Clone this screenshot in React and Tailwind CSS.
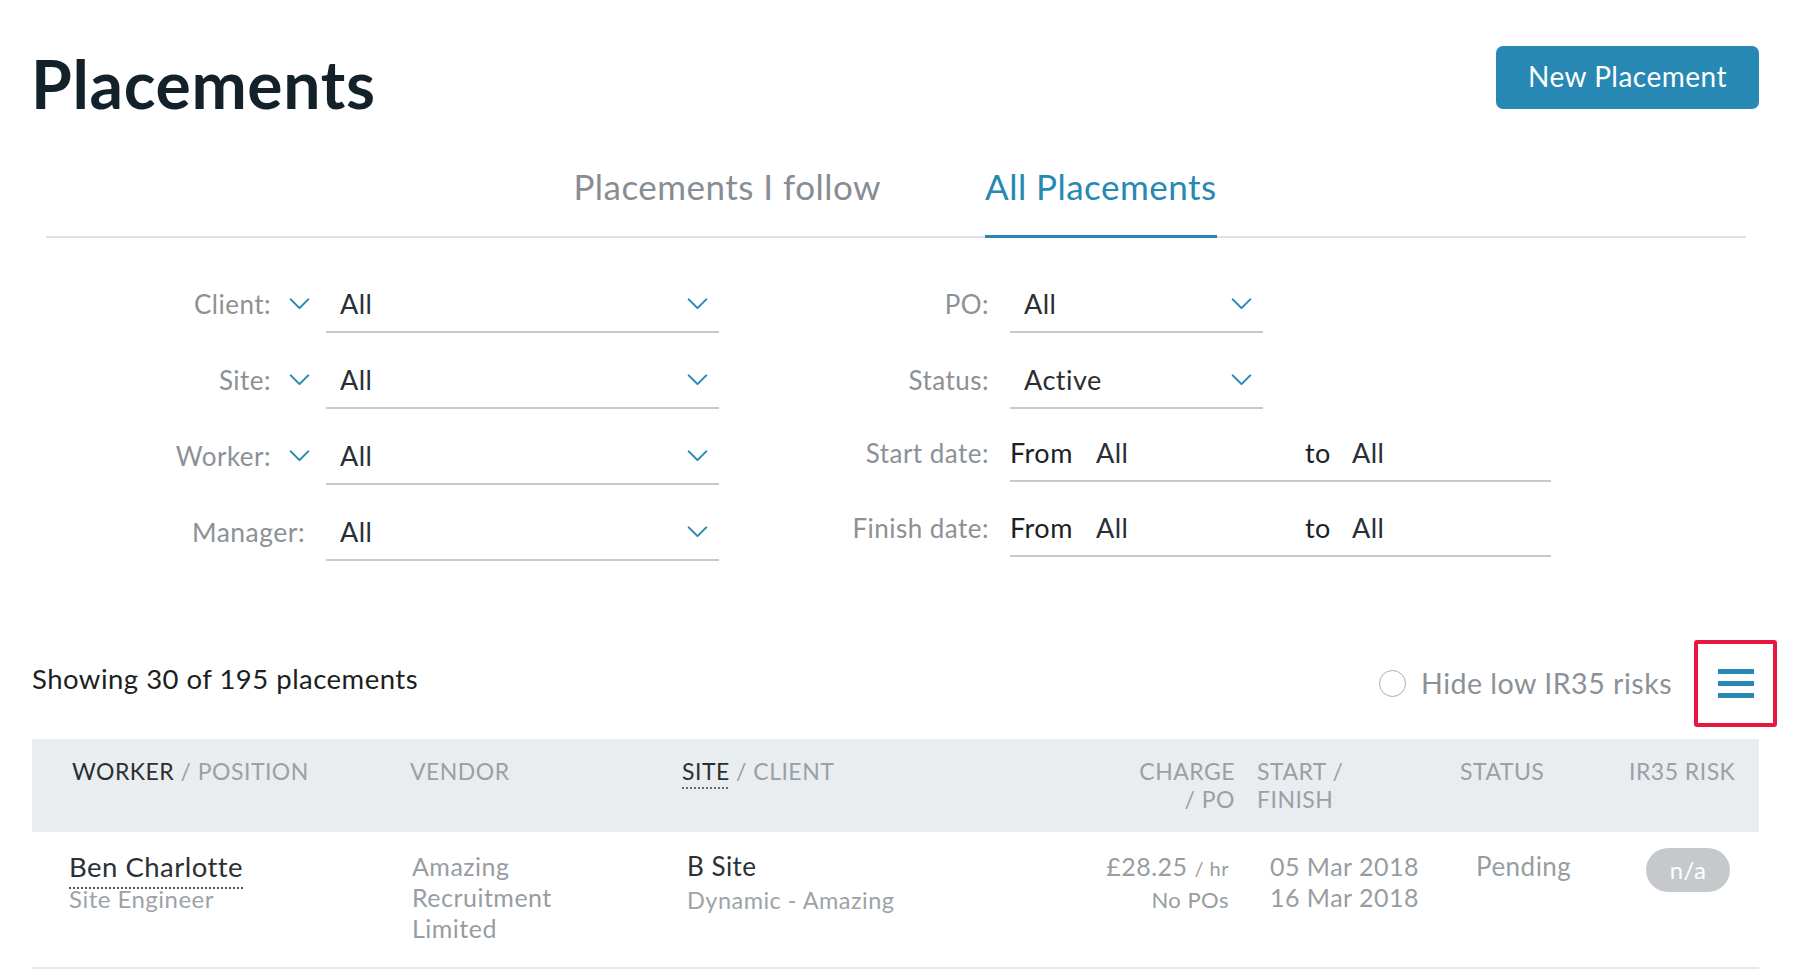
import React from 'react';

const font = { fontFamily: 'Lato, "Open Sans", sans-serif' };

function Chevron({ className = '' }) {
    return (
        <svg viewBox="0 0 22 13" className={className} fill="none" stroke="#2688b3" strokeWidth="2.2" strokeLinecap="round" strokeLinejoin="round">
            <path d="M1.5 1.5 L11 11 L20.5 1.5" />
        </svg>
    );
}

function SelectBox({ value, width }) {
    return (
        <div className={`${width} h-[48px] flex items-start justify-between border-b-2 border-[#c6cacd] pl-[14px] pr-[11px]`}>
            <span className="leading-[38px] text-[27px] text-[#2a2f33]">{value}</span>
            <Chevron className="w-[21px] h-[12px] mt-[13px]" />
        </div>
    );
}

function LeftRow({ label, chevron = true, value }) {
    return (
        <div className="flex items-start">
            {chevron ? (
                <>
                    <div className="w-[171px] text-right leading-[38px] text-[26px] text-[#8b9196]">{label}</div>
                    <div className="w-[55px] pl-[18px] pt-[13px]">
                        <Chevron className="w-[21px] h-[12px]" />
                    </div>
                </>
            ) : (
                <div className="w-[205px] mr-[21px] text-right leading-[38px] text-[26.5px] text-[#8b9196]">{label}</div>
            )}
            <SelectBox value={value} width="w-[393px]" />
        </div>
    );
}

function RightLabel({ children }) {
    return <div className="w-[270px] mr-[21px] text-right leading-[38px] text-[26px] text-[#8b9196]">{children}</div>;
}

function DateRow({ label, className = '' }) {
    return (
        <div className={`flex items-start ${className}`}>
            <RightLabel>{label}</RightLabel>
            <div className="w-[541px] h-[48px] flex items-start border-b-2 border-[#c6cacd] text-[27px] leading-[38px]">
                <span className="w-[86px] text-[#1c2124]">From</span>
                <span className="w-[209px] text-[#2a2f33]">All</span>
                <span className="w-[47px] text-[#1c2124]">to</span>
                <span className="text-[#2a2f33]">All</span>
            </div>
        </div>
    );
}

export default function App() {
    return (
        <div className="min-h-screen bg-white tracking-[0.03em] overflow-hidden" style={font}>

            {/* Header */}
            <div className="flex justify-between items-start pt-[46px] pl-[31px] pr-[37px]">
                <h1 className="mt-[5px] text-[66px] leading-[66px] font-bold text-[#13222a] tracking-[0.01em]">Placements</h1>
                <button className="w-[263px] h-[63px] pb-[4px] rounded-[7px] bg-[#2688b3] text-white text-[28px] flex items-center justify-center">
                    New Placement
                </button>
            </div>

            {/* Tabs */}
            <div className="mt-[49px] ml-[46px] mr-[50px] flex justify-center gap-[102px] border-b-2 border-[#dde1e4]">
                <div className="pb-[29px] -mb-[2px] border-b-[3px] border-transparent text-[35px] leading-[40px] text-[#878d92] translate-x-[-2px]">
                    Placements I follow
                </div>
                <div className="pb-[29px] -mb-[2px] border-b-[3px] border-[#2688b3] text-[35px] leading-[40px] text-[#2688b3]">
                    All Placements
                </div>
            </div>

            {/* Filters */}
            <div className="flex pl-[100px] mt-[47px]">
                <div className="flex flex-col gap-[28px]">
                    <LeftRow label="Client:" value="All" />
                    <LeftRow label="Site:" value="All" />
                    <LeftRow label="Worker:" value="All" />
                    <LeftRow label="Manager:" chevron={false} value="All" />
                </div>
                <div className="flex flex-col gap-[28px]">
                    <div className="flex items-start">
                        <RightLabel>PO:</RightLabel>
                        <SelectBox value="All" width="w-[253px]" />
                    </div>
                    <div className="flex items-start">
                        <RightLabel>Status:</RightLabel>
                        <SelectBox value="Active" width="w-[253px]" />
                    </div>
                    <DateRow label="Start date:" className="-mt-[3px]" />
                    <DateRow label="Finish date:" className="-mt-[1px]" />
                </div>
            </div>

            {/* Summary bar */}
            <div className="mt-[79px] flex items-center justify-between pl-[32px] pr-[19px]">
                <div className="text-[27.5px] text-[#1b1f22] -mt-[9px]">Showing 30 of 195 placements</div>
                <div className="flex items-center">
                    <span className="w-[27px] h-[27px] rounded-full border-[1.5px] border-[#a9aeb2] mr-[15px]"></span>
                    <span className="text-[28.6px] text-[#8b9196] mr-[22px]">Hide low IR35 risks</span>
                    <button className="w-[83px] h-[87px] border-4 border-[#e8173f] rounded-[3px] flex flex-col items-center justify-center gap-[7px]">
                        <span className="block w-[36px] h-[5px] bg-[#2688b3]"></span>
                        <span className="block w-[36px] h-[5px] bg-[#2688b3]"></span>
                        <span className="block w-[36px] h-[5px] bg-[#2688b3]"></span>
                    </button>
                </div>
            </div>

            {/* Table */}
            <div className="mx-[32px] mt-[12px] w-[1727px]">
                <div className="grid grid-cols-[378px_272px_398px_157px_223px_169px_130px] h-[93px] bg-[#e9edf0] pt-[18px] text-[23px] leading-[28px] text-[#9aa0a5] whitespace-nowrap">
                    <div className="pl-[40px]"><span className="text-[#2a2f33]">WORKER</span> / POSITION</div>
                    <div>VENDOR</div>
                    <div><span className="text-[#2a2f33] underline decoration-dotted decoration-[#666] decoration-2 underline-offset-[7px]">SITE</span> / CLIENT</div>
                    <div className="text-right pr-[2px]">CHARGE<br />/ PO</div>
                    <div className="pl-[20px]">START /<br />FINISH</div>
                    <div>STATUS</div>
                    <div>IR35 RISK</div>
                </div>

                <div className="grid grid-cols-[378px_272px_398px_157px_223px_169px_130px] h-[137px] border-b-2 border-[#e6e9ec] pt-[19px] text-[#979da2]">
                    <div className="pl-[37px]">
                        <div className="text-[27.5px] leading-[31px] text-[#2b3035] underline decoration-dotted decoration-[#555] decoration-[1.5px] underline-offset-[10px]">Ben Charlotte</div>
                        <div className="mt-[3px] text-[24px] leading-[28px] text-[#9da3a7]">Site Engineer</div>
                    </div>
                    <div className="pl-[2px] text-[25px] leading-[31px]">
                        <div>Amazing</div>
                        <div>Recruitment</div>
                        <div>Limited</div>
                    </div>
                    <div className="pl-[5px]">
                        <div className="text-[26px] leading-[31px] text-[#2b3035]">B Site</div>
                        <div className="mt-[3px] text-[23.5px] leading-[31px] text-[#9da3a7]">Dynamic - Amazing</div>
                    </div>
                    <div className="pr-[8px] text-right">
                        <div className="text-[25px] leading-[31px]">£28.25 <span className="text-[20px]">/ hr</span></div>
                        <div className="text-[22px] leading-[31px]">No POs</div>
                    </div>
                    <div className="pl-[33px] text-[25px] leading-[31px]">
                        <div>05 Mar 2018</div>
                        <div>16 Mar 2018</div>
                    </div>
                    <div className="pl-[16px] text-[26px] leading-[31px]">Pending</div>
                    <div className="pl-[17px]">
                        <span className="-mt-[3px] w-[84px] h-[44px] rounded-full bg-[#c6c9cc] text-white text-[24px] flex items-center justify-center">n/a</span>
                    </div>
                </div>
            </div>
        </div>
    );
}
